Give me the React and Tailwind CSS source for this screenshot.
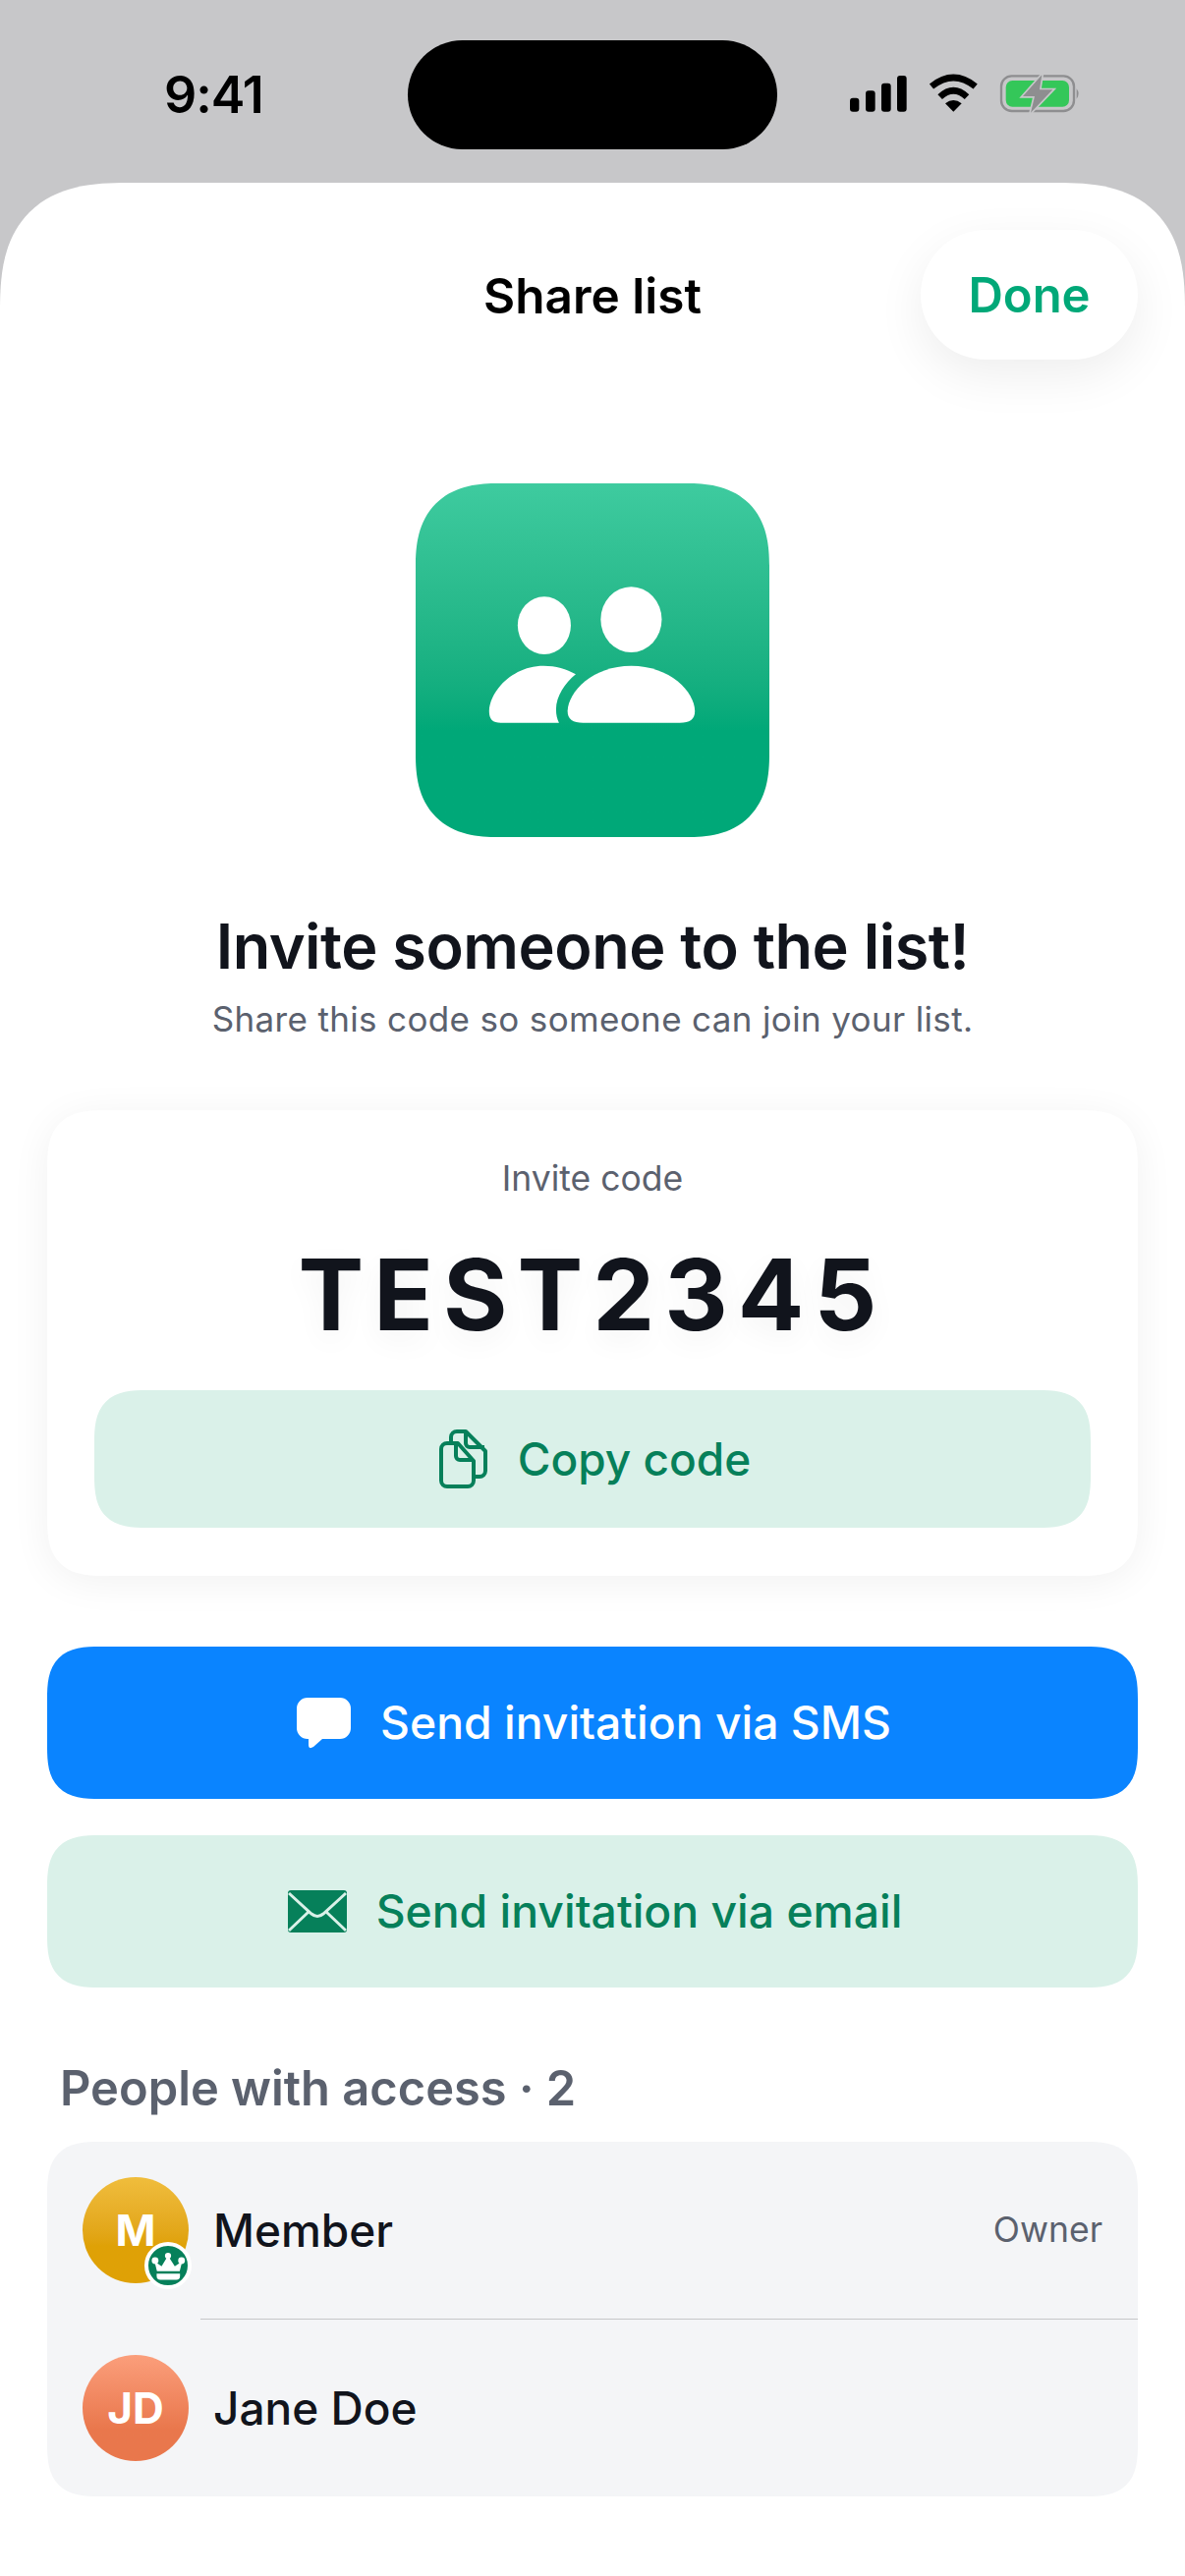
import React from 'react';

function StatusIcons() {
  return (
    <svg viewBox="190 75 720 180" className="block h-[60px] w-[240px]">
      <rect x="196" y="155" width="28" height="42" rx="9" fill="#000" />
      <rect x="244" y="133" width="29" height="64" rx="9" fill="#000" />
      <rect x="292" y="110" width="29" height="87" rx="9" fill="#000" />
      <rect x="340" y="87" width="29" height="110" rx="9" fill="#000" />
      <path d="M445 120 Q512 66 579 120" fill="none" stroke="#000" strokeWidth="20" />
      <path d="M471 152 Q512 114 553 152" fill="none" stroke="#000" strokeWidth="20" />
      <path d="M512 197 L487 172 Q512 152 537 172 Z" fill="#000" />
      <rect x="658" y="88" width="222" height="107" rx="32" fill="none" stroke="#8e8e90" strokeWidth="7" />
      <rect x="672" y="102" width="193" height="80" rx="20" fill="#34c759" />
      <path d="M888 127 Q900 142 888 158 Z" fill="#8e8e90" />
      <path d="M782 85 L724 150 L760 150 L748 200 L815 130 L775 130 Z" fill="#8e8e90" stroke="#c7c7c9" strokeWidth="10" paintOrder="stroke" />
    </svg>
  );
}

function PeopleIcon() {
  return (
    <svg viewBox="70 66 1078 1078" className="block h-full w-full">
      <ellipse cx="462" cy="499" rx="81" ry="88" fill="#fff" />
      <ellipse cx="727" cy="481" rx="93" ry="100" fill="#fff" />
      <path d="M580 796 C550 796 533 785 533 760 C535 700 610 622 727 622 C845 622 920 700 921 760 C921 785 905 796 875 796 Z" fill="#fff" />
      <path d="M330 796 C305 796 294 785 294 760 C296 700 365 622 460 622 C497 622 530 632 558 648 C525 675 498 715 498 755 C498 772 501 785 507 796 Z" fill="#fff" />
    </svg>
  );
}

function CopyIcon() {
  return (
    <svg width="50" height="60" viewBox="0 0 50 60" fill="none" stroke="#06805a" strokeWidth="4" strokeLinejoin="round">
      <path d="M12 14 V8 a6 6 0 0 1 6-6 H27 L47 22 V42 a6 6 0 0 1-6 6 H36" />
      <path d="M27 2 V14 a4 4 0 0 0 4 4 H46" />
      <path d="M8 14 H19 L35 32 V52 a6 6 0 0 1-6 6 H8 a6 6 0 0 1-6-6 V20 a6 6 0 0 1 6-6 Z" />
      <path d="M17 15 V27 a4 4 0 0 0 4 4 H34" />
    </svg>
  );
}

function SmsIcon() {
  return (
    <svg width="55" height="52" viewBox="0 0 55 52">
      <path d="M11 0 H44 a11 11 0 0 1 11 11 V31 a11 11 0 0 1-11 11 H26 L17 50 Q12 53 12 48 V42 H11 a11 11 0 0 1-11-11 V11 a11 11 0 0 1 11-11 Z" fill="#fff" />
    </svg>
  );
}

function MailIcon() {
  return (
    <svg width="60" height="43" viewBox="0 0 60 43">
      <rect width="60" height="43" rx="3" fill="#06805a" />
      <path d="M1 3 L24 24 Q30 29 36 24 L59 3 M1 41 L21 22 M59 41 L39 22" fill="none" stroke="#daf1e9" strokeWidth="3" />
    </svg>
  );
}

function CrownBadge() {
  return (
    <div className="absolute left-[63px] top-[66px] flex h-[48px] w-[48px] items-center justify-center rounded-full border-[4px] border-white bg-[#06805a]">
      <svg viewBox="358 380 128 128" className="h-[40px] w-[40px] shrink-0">
        <circle cx="422" cy="412" r="10" fill="#fff" />
        <circle cx="380" cy="428" r="11" fill="#fff" />
        <circle cx="466" cy="428" r="11" fill="#fff" />
        <path d="M386 462 L378 430 L401 446 L422 412 L444 446 L468 430 L460 462 Z" fill="#fff" />
        <path d="M385 470 H461 V478 Q461 490 449 490 H397 Q385 490 385 478 Z" fill="#fff" />
      </svg>
    </div>
  );
}

export default function App() {
  return (
    <div className="flex h-[2622px] w-[1206px] flex-col overflow-hidden bg-[#c7c7c9] font-[Inter,sans-serif] text-[#11141c]">
      {/* status bar */}
      <div className="flex h-[186px] shrink-0 items-start pl-[167px] pt-[41px]">
        <div className="mt-[28px] w-[248px] text-[52px] font-semibold leading-[56px] tracking-[-1px] text-black">9:41</div>
        <div className="h-[111px] w-[376px] rounded-[56px] bg-black" />
        <div className="ml-[72px] mt-[32px]">
          <StatusIcons />
        </div>
      </div>

      {/* sheet */}
      <div className="flex-1 rounded-t-[130px] bg-white [corner-shape:superellipse(1.4)]">
        <div className="grid grid-cols-[221px_1fr_221px] items-center px-[48px] pt-[48px]">
          <div />
          <div className="pt-[2px] text-center text-[49.5px] font-semibold leading-[60px] text-black">Share list</div>
          <div className="flex h-[132px] items-center justify-center rounded-[66px] bg-white pt-[2px] text-[49px] font-semibold text-[#00a878] shadow-[0_16px_50px_rgba(0,0,0,0.07)]">
            Done
          </div>
        </div>

        <div className="mx-auto mt-[126px] h-[360px] w-[360px] rounded-[84px] bg-gradient-to-b from-[#3ecb9f] to-[#00a878] to-[70%] [corner-shape:superellipse(1.3)]">
          <PeopleIcon />
        </div>

        <h1 className="mt-[75px] pb-[2px] text-center text-[63px] font-semibold leading-[72px] tracking-[-0.5px]">Invite someone to the list!</h1>
        <p className="mt-[14px] text-center text-[35px] leading-[44px] tracking-[0.35px] text-[#5b616e]">Share this code so someone can join your list.</p>

        <div className="mx-[48px] mt-[71px] rounded-[60px] bg-white px-[48px] pb-[49px] pt-[50px] shadow-[0_6px_40px_rgba(0,0,0,0.06)] [corner-shape:superellipse(1.5)]">
          <div className="text-center text-[35.5px] leading-[40px] text-[#5b616e]">Invite code</div>
          <div className="mt-[38px] text-center text-[100px] font-bold leading-[120px] tracking-[10px] [text-shadow:0_10px_30px_rgba(0,0,0,0.05)]">TEST2345</div>
          <button className="mt-[37px] flex h-[140px] w-full items-center justify-center gap-[30px] rounded-[54px] bg-[#daf1e9] pl-[5px] text-[46px] font-medium text-[#06805a] [corner-shape:superellipse(1.5)]">
            <CopyIcon />
            <span>Copy code</span>
          </button>
        </div>

        <div className="mx-[48px] mt-[72px] flex flex-col gap-[37px]">
          <button className="flex h-[155px] items-center justify-center gap-[30px] rounded-[54px] bg-[#0a84ff] pl-[3px] text-[46.3px] font-medium text-white [corner-shape:superellipse(1.5)]">
            <SmsIcon />
            <span>Send invitation via SMS</span>
          </button>
          <button className="flex h-[155px] items-center justify-center gap-[30px] rounded-[54px] bg-[#daf1e9] pl-[5px] text-[46.3px] font-medium text-[#06805a] [corner-shape:superellipse(1.5)]">
            <MailIcon />
            <span>Send invitation via email</span>
          </button>
        </div>

        <div className="mt-[73px] pl-[61px] text-[48.8px] font-semibold leading-[60px] text-[#5b616e]">People with access · 2</div>

        <div className="mx-[48px] mt-[24px] rounded-[54px] bg-[#f4f5f7] [corner-shape:superellipse(1.5)]">
          <div className="flex h-[180px] items-center px-[36px]">
            <div className="relative flex h-[108px] w-[108px] shrink-0 items-center justify-center rounded-full bg-gradient-to-b from-[#f0bd3c] to-[#dfa106] to-[65%] text-[44px] font-bold text-white">
              M
              <CrownBadge />
            </div>
            <div className="ml-[25px] flex-1 text-[46px] font-medium">Member</div>
            <div className="text-[35.5px] text-[#5b616e]">Owner</div>
          </div>
          <div className="ml-[156px] h-[1px] bg-[#c5c6c9]" />
          <div className="flex h-[180px] items-center px-[36px]">
            <div className="flex h-[108px] w-[108px] shrink-0 items-center justify-center rounded-full bg-gradient-to-b from-[#fb9e7b] to-[#e9774c] to-[70%] text-[44px] font-bold text-white">
              JD
            </div>
            <div className="ml-[25px] flex-1 text-[46px] font-medium">Jane Doe</div>
          </div>
        </div>
      </div>
    </div>
  );
}
